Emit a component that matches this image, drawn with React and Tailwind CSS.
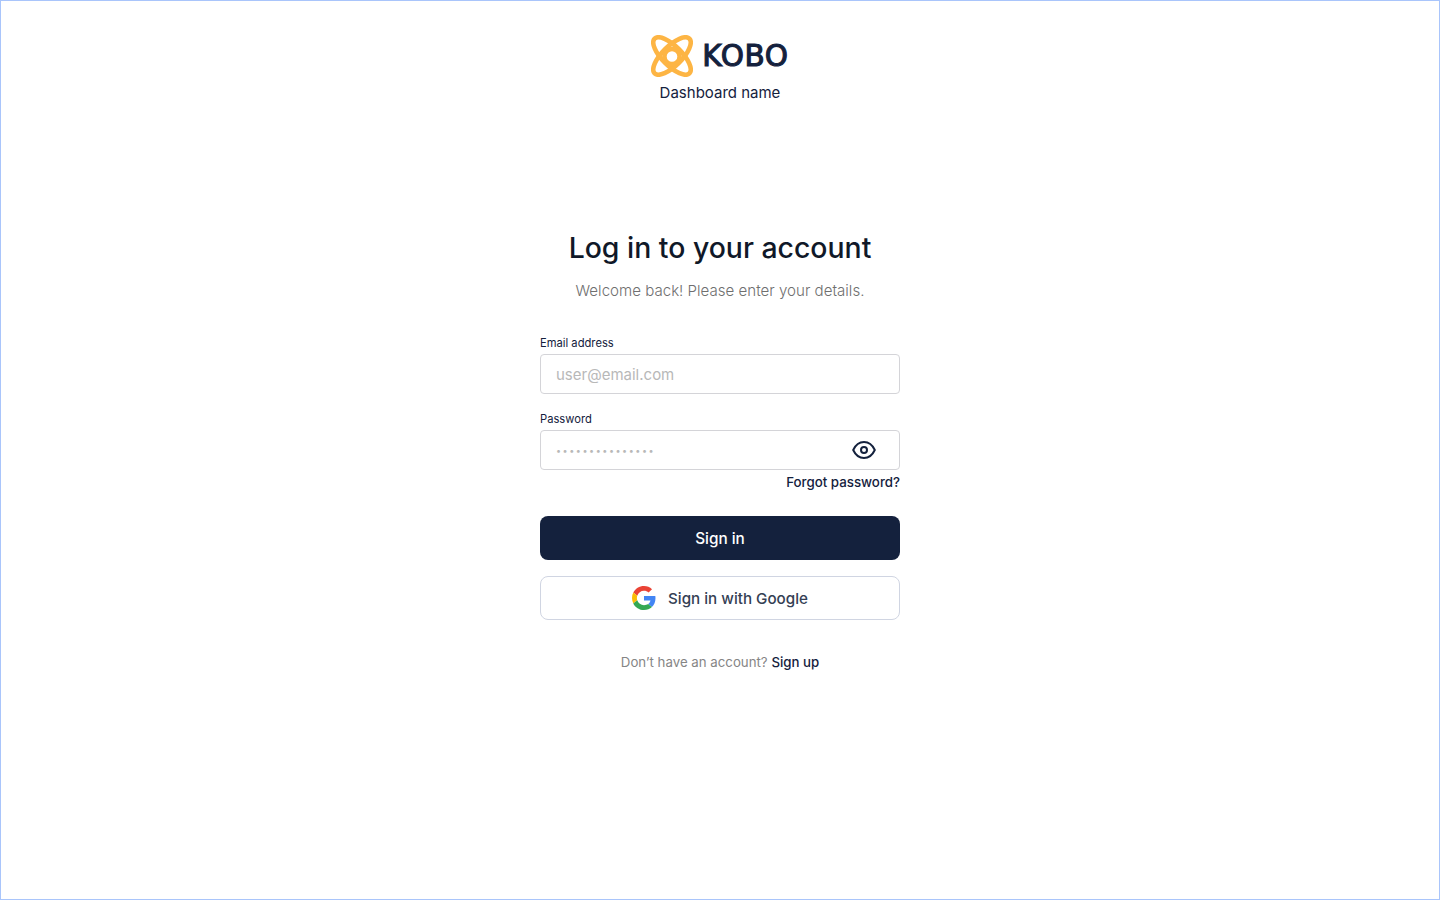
function KoboMark() {
  return (
    <svg width="42" height="42" viewBox="1 1 42 42" fill="none" className="shrink-0">
      <g stroke="#FDB544" strokeWidth="4.6">
        <ellipse cx="22" cy="22" rx="24.6" ry="9.8" transform="rotate(45 22 22)" />
        <ellipse cx="22" cy="22" rx="24.6" ry="9.8" transform="rotate(-45 22 22)" />
        <circle cx="22" cy="22.5" r="7.6" fill="#fff" />
      </g>
    </svg>
  );
}

function EyeIcon() {
  return (
    <svg width="26" height="26" viewBox="0 0 26 26" fill="none" stroke="#14213D" strokeWidth="2">
      <path d="M2.2 13C4.8 7.4 8.4 5 13 5S21.2 7.4 23.8 13C21.2 18.6 17.6 21 13 21S4.8 18.6 2.2 13Z" strokeLinejoin="round" />
      <circle cx="13" cy="13" r="3" />
    </svg>
  );
}

function GoogleIcon() {
  return (
    <svg width="24" height="24" viewBox="0 0 48 48">
      <path fill="#EA4335" d="M24 9.5c3.54 0 6.71 1.22 9.21 3.6l6.85-6.85C35.9 2.38 30.47 0 24 0 14.62 0 6.51 5.38 2.56 13.22l7.98 6.19C12.43 13.72 17.74 9.5 24 9.5z" />
      <path fill="#4285F4" d="M46.98 24.55c0-1.57-.15-3.09-.38-4.55H24v9.02h12.94c-.58 2.96-2.26 5.48-4.78 7.18l7.73 6c4.51-4.18 7.09-10.36 7.09-17.65z" />
      <path fill="#FBBC05" d="M10.53 28.59c-.48-1.45-.76-2.99-.76-4.59s.27-3.14.76-4.59l-7.98-6.19C.92 16.46 0 20.12 0 24c0 3.88.92 7.54 2.56 10.78l7.97-6.19z" />
      <path fill="#34A853" d="M24 48c6.48 0 11.93-2.13 15.89-5.81l-7.73-6c-2.15 1.45-4.92 2.3-8.16 2.3-6.26 0-11.57-4.22-13.47-9.91l-7.98 6.19C6.51 42.62 14.62 48 24 48z" />
    </svg>
  );
}

export default function App() {
  return (
    <div className="h-screen border border-[#a9c5fb] bg-white font-['Inter',sans-serif] text-[#14213d]">
      <div className="flex flex-col items-center pt-[34px]">
        <div className="flex h-[42px] items-center gap-[9px]">
          <KoboMark />
          <span className="pt-[1px] font-['DejaVu_Sans',sans-serif] text-[29.5px] leading-none tracking-[0.6px] text-[#14213d] [-webkit-text-stroke:1.1px_#14213d]">KOBO</span>
        </div>
        <p className="mt-[5px] text-[15px] leading-[22px]">Dashboard name</p>
      </div>

      <div className="mx-auto mt-[126px] w-[360px]">
        <h1 className="-mx-10 text-center text-[28.4px] font-medium leading-[36px] text-[#101828]">Log in to your account</h1>
        <p className="mt-[14px] text-center text-[15.1px] font-light leading-[22px] text-[#6f6f6f]">
          Welcome back! Please enter your details.
        </p>

        <form className="mt-[33px]">
          <label className="block text-[11.2px] leading-[16px]">Email address</label>
          <input
            type="email"
            placeholder="user@email.com"
            className="mt-[3px] block h-[40px] w-full rounded-[4px] border border-[#d4d4d8] bg-white px-[15px] text-[15px] outline-none placeholder:text-[#b8b8b8]"
          />

          <label className="mt-[17px] block text-[11.2px] leading-[16px]">Password</label>
          <div className="relative mt-[3px]">
            <input
              type="text"
              placeholder="•••••••••••••••"
              className="block h-[40px] w-full rounded-[4px] border border-[#d4d4d8] bg-white pl-[15px] pr-[50px] text-[9px] tracking-[1.55px] outline-none placeholder:text-[#b8b8b8]"
            />
            <span className="absolute right-[23px] top-[7px]">
              <EyeIcon />
            </span>
          </div>
          <div className="mt-[3px] text-right text-[13.3px] font-medium leading-[18px]">Forgot password?</div>

          <button type="button" className="mt-[25px] flex h-[44px] w-full items-center justify-center rounded-[8px] bg-[#14213d] pt-[2px] text-[15.3px] font-medium text-white">
            Sign in
          </button>
          <button type="button" className="mt-[16px] flex h-[44px] w-full items-center justify-center gap-[12px] rounded-[8px] border border-[#d0d5e2] bg-white text-[15.2px] font-medium text-[#344054]">
            <GoogleIcon />
            <span className="pt-[2px]">Sign in with Google</span>
          </button>
        </form>

        <p className="mt-[32px] text-center text-[13.25px] leading-[20px] text-[#858585]">
          Don’t have an account? <span className="font-medium text-[#14213d]">Sign up</span>
        </p>
      </div>
    </div>
  );
}
